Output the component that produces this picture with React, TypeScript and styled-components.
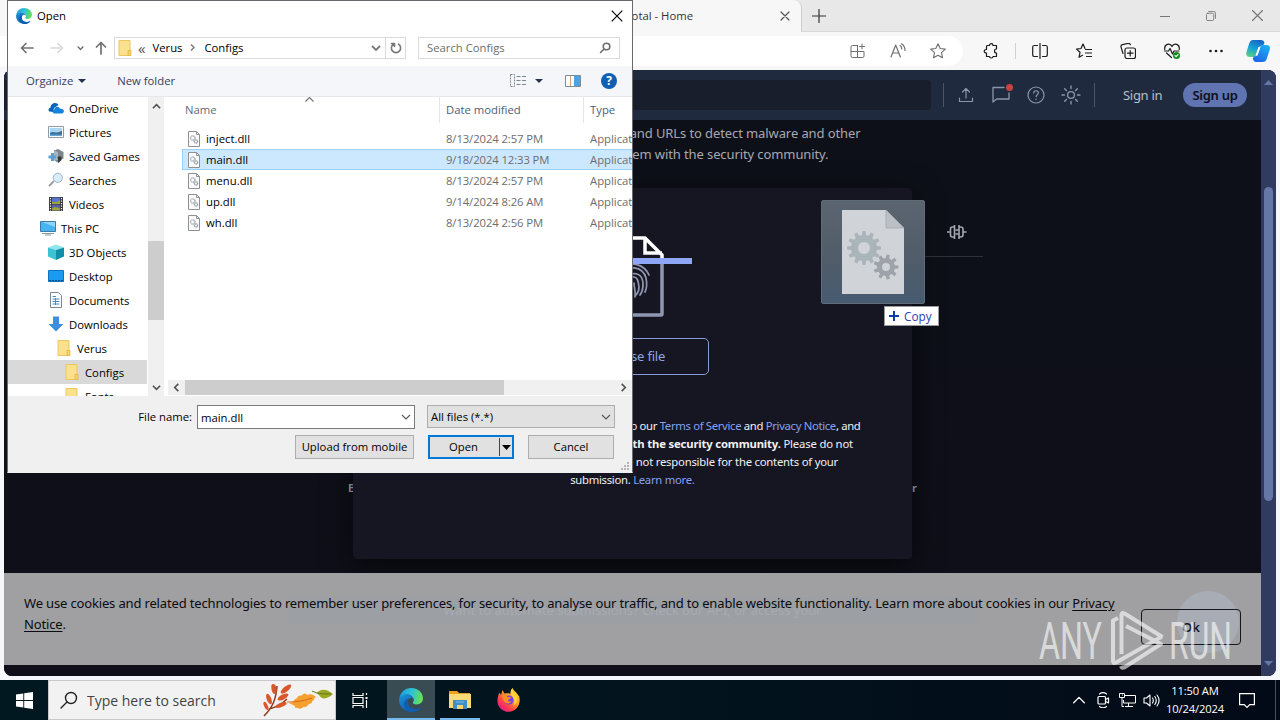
import type { ReactNode } from "react";
import { createGlobalStyle, styled } from "styled-components";

const uiFont = `"Open Sans", "Noto Sans", sans-serif`;

const GlobalStyle = createGlobalStyle`
  * {
    box-sizing: border-box;
  }
  body {
    margin: 0;
    overflow: hidden;
    font-family: ${uiFont};
  }
  svg {
    display: block;
    flex: none;
  }
`;

interface IconProps {
  size?: number;
}

/* ---------- icons ---------- */

const EdgeIcon = ({ size = 16 }: IconProps) => (
  <svg width={size} height={size} viewBox="0 0 24 24">
    <defs>
      <linearGradient id="edgeTop" x1="0" y1="0.3" x2="1" y2="0.5">
        <stop offset="0" stopColor="#1b9de2" />
        <stop offset="0.5" stopColor="#2fc3d6" />
        <stop offset="1" stopColor="#6be04f" />
      </linearGradient>
      <linearGradient id="edgeLow" x1="0" y1="0" x2="0.8" y2="1">
        <stop offset="0" stopColor="#1f95dc" />
        <stop offset="1" stopColor="#0b4f9e" />
      </linearGradient>
    </defs>
    <path d="M.3 11C1 4.500 6 0 12 0c7 0 12 4.800 12 10.300 0 4-3 6.200-6.200 6.200-2.800 0-4.300-1.200-4-2 .3-.6 1-1 1-2.500C14.800 9 11.500 6.500 8 6.500 4 6.500 1 9 .3 11z" fill="url(#edgeTop)" />
    <path d="M.1 12.500C0 8.500 3.500 6.200 7.800 6.200c3.400 0 6.600 2 6.900 5.200-.9-1-2-1.500-3.200-1.300-2 .4-3.300 2.400-2.800 5.200.7 4 4.500 6 8.200 5.700 2-.1 3.600-.7 5.100-1.600C20 22.500 16.500 24 12.500 24 5.500 24 .3 18.800.1 12.500z" fill="url(#edgeLow)" />
    <path d="M8.600 14c-.7 4.500 3.200 7.800 8.400 7 2.500-.4 4.400-1.400 5.200-2.200-3.600 6.400-12.700 6-16 1.500-2.700-3.800-1-9 3.600-10.100-.6.800-1 2.200-1.200 3.800z" fill="#0d5fb5" />
  </svg>
);

const FirefoxIcon = () => (
  <svg width="24" height="24" viewBox="0 0 24 24">
    <defs>
      <linearGradient id="fox" x1="0.9" y1="0.1" x2="0.2" y2="0.95">
        <stop offset="0" stopColor="#ffe63b" />
        <stop offset="0.4" stopColor="#ff9a2a" />
        <stop offset="0.7" stopColor="#ff4545" />
        <stop offset="1" stopColor="#e3168a" />
      </linearGradient>
    </defs>
    <path d="M2.500 4.500 4 7l1.500-5 2 3.500c3-.5 4.500-.2 6 .2-.3-2.200.4-4.200 2.300-5.700.5 3 3.200 3.700 5 6.500l.5 1.500.5-.8c3 8-2 16.600-10 16.600C5 23.800 0 18.400.5 12c.1-3 1-5.500 2-7.500z" fill="url(#fox)" />
    <circle cx="12" cy="12" r="4.600" fill="#7542e5" />
    <path d="M5 7.500c3-1 4.500 0 5.500 1.500 1 .3 3 0 3.500.5-.5 1.500-2.500 1.600-3 2.500 0 1.500 1.800 2 3.500 1.300-1.200 2.200-3.500 2.800-6 1.500C6 13 5.500 10 5 7.500z" fill="#ff8f22" />
    <path d="M15 1c.5 4 5 5 5 11 0 3-2 5-4 6 2-3 2.500-7-1-10-1.500-2-1.500-5 0-7z" fill="#ffd43a" />
  </svg>
);

const ExplorerIcon = () => (
  <svg width="24" height="22" viewBox="0 0 24 22">
    <path d="M1 2h8l2 2h11v4H1z" fill="#e8a327" />
    <path d="M1 5h22v14H1z" fill="#fbdb77" />
    <path d="M5 20v-9h14v9h-4v-4H9v4z" fill="#3f8fc8" />
    <path d="M9 20v-4h6v4z" fill="#f2d270" />
    <path d="M8 13h8" stroke="#7bbbe2" />
  </svg>
);

const CopilotIcon = () => (
  <svg width="24" height="24" viewBox="0 0 24 24">
    <defs>
      <linearGradient id="copL" x1="0.6" y1="0" x2="0.2" y2="1">
        <stop offset="0" stopColor="#1668c8" />
        <stop offset="0.5" stopColor="#16a3d4" />
        <stop offset="1" stopColor="#5bd184" />
      </linearGradient>
      <linearGradient id="copR" x1="0.8" y1="0" x2="0.2" y2="1">
        <stop offset="0" stopColor="#1fb0f0" />
        <stop offset="1" stopColor="#1b63e6" />
      </linearGradient>
    </defs>
    <path d="M7 1h8c2 0 3 1 3.500 3L17 6.500c-3 0-4 1-5 4l-2 6c-.7 1.300-1.500 1.500-3 1.500H4c-3 0-4.500-2-3.500-5L3 5c.8-2.700 2-4 4-4z" fill="url(#copL)" />
    <path d="M17 6h3.500c3 0 4 2 3.200 5L21 19c-.8 3-2.200 4-4.500 4h-6c-2.300 0-3-1-3.700-3.500L8 17.500c2 0 3-1 4-4l2-5c.7-2 1.500-2.500 3-2.500z" fill="url(#copR)" />
    <path d="m12.500 8-3 8.500h2l3-8.500z" fill="#fff" />
  </svg>
);

const Stroke = ({ size = 16, box = 16, w = 1, children }: { size?: number; box?: number; w?: number; children: ReactNode }) => (
  <svg width={size} height={size} viewBox={`0 0 ${box} ${box}`} fill="none" stroke="currentColor" strokeWidth={w} strokeLinecap="round" strokeLinejoin="round">
    {children}
  </svg>
);

const starPath = "m8 .8 2.200 4.700 5.100.6-3.800 3.500 1 5.200L8 12.200l-4.500 2.600 1-5.200L.7 6.100l5.100-.6z";

const FolderIcon = () => (
  <svg width="16" height="16" viewBox="0 0 16 16">
    <path d="M2 .5h11v15H2z" fill="#fbe08d" stroke="#ecc75d" />
    <path d="M11 10.500h3v5h-3z" fill="#f6d06a" stroke="#e0b53f" strokeWidth=".7" />
  </svg>
);

const DllIcon = () => (
  <svg width="14" height="16" viewBox="0 0 14 16">
    <path d="M1.500.5h8l3 3v12h-11z" fill="#fbfbfb" stroke="#8d9194" />
    <path d="M9.500.5v3h3" fill="none" stroke="#8d9194" />
    <circle cx="5.800" cy="7" r="2.200" fill="none" stroke="#9aa6b0" strokeDasharray="1.200 .4" strokeWidth="1.300" />
    <circle cx="9" cy="10.500" r="1.600" fill="none" stroke="#8a9299" strokeDasharray="1 .4" strokeWidth="1.300" />
  </svg>
);

const placeIcons: Record<string, ReactNode> = {
  onedrive: (
    <svg width="16" height="16" viewBox="0 0 16 16">
      <path d="M1.500 11.500C0 10.800.3 8 2.500 7.700 2.600 4.500 5 3 7 3c1.700 0 2.900.8 3.500 2L6 8l-1 4z" fill="#0a63b8" />
      <path d="M6.500 13.500c-2.300 0-2.500-3.500-.2-4C6.500 6.800 10.500 5.600 12 8.700c3-.4 4.300 1.300 3.800 3-.3 1.200-1 1.800-2.300 1.800z" fill="#1583dc" />
    </svg>
  ),
  pictures: (
    <svg width="16" height="16" viewBox="0 0 16 16">
      <path d="M.5 2.500h15v11H.5z" fill="#fff" stroke="#8f9ba6" />
      <path d="M2 4h12v8H2z" fill="#a9d4f2" />
      <path d="M2 9c3-2 5 0 7-.5L14 7v5H2z" fill="#3f6f96" />
      <path d="M2 10.500h12V12H2z" fill="#5fa4d6" />
    </svg>
  ),
  games: (
    <svg width="16" height="16" viewBox="0 0 16 16">
      <path d="M6 2.500 10 1l5.500 3v6.500L12 12l-1.500 3L6 12z" fill="#7b878f" />
      <path d="m6 2.500 4 1.500v8L6 12z" fill="#a9b4bc" />
      <path d="M9.500 8.500h4V12l-3 3z" fill="#30383d" />
      <path d="M3 5h3v2.500h2v3H6V13H3v-2.500H.5v-3H3z" fill="#58a0d8" />
    </svg>
  ),
  searches: (
    <svg width="16" height="16" viewBox="0 0 16 16">
      <path d="m1 14 5-5" stroke="#9aa0a6" strokeWidth="1.800" />
      <circle cx="9.800" cy="5.800" r="4.600" fill="#d8edfb" stroke="#9fb4c4" />
    </svg>
  ),
  videos: (
    <svg width="16" height="16" viewBox="0 0 16 16">
      <path d="M1 1h14v14H1z" fill="#32363c" />
      <path d="M4 1.500h8V8H4z" fill="#5b73c9" />
      <path d="M4 8.500h8v6H4z" fill="#5560a8" />
      <path d="M4 6h5l3-2v4H4zM4 12l3-1 5 1v2.500H4z" fill="#9ca33c" />
      <path d="M2.500 2v13M13.500 2v13" stroke="#fff" strokeWidth="1.200" strokeDasharray="1.300 1.200" />
    </svg>
  ),
  pc: (
    <svg width="16" height="16" viewBox="0 0 16 16">
      <path d="M.5 1.500h15v10H.5z" fill="#48b4f0" stroke="#3d7ba6" />
      <path d="M2 2h13v5z" fill="#8fd4f9" />
      <path d="M2 13.500h12M5 15h6" stroke="#8d9aa5" />
    </svg>
  ),
  objects: (
    <svg width="16" height="16" viewBox="0 0 16 16">
      <path d="m0 3.500 8-3 8 3-8 2.500z" fill="#8fe7ee" />
      <path d="M0 3.500 8 6v10l-8-3.500z" fill="#3cc4d4" />
      <path d="M16 3.500 8 6v10l8-3.500z" fill="#128ea6" />
    </svg>
  ),
  desktop: (
    <svg width="16" height="16" viewBox="0 0 16 16">
      <path d="M.5 2.500h15v11H.5z" fill="#1a9af0" stroke="#1273ba" />
      <path d="M1 12.500h14" stroke="#0a4f89" strokeDasharray="2 1" />
    </svg>
  ),
  documents: (
    <svg width="16" height="16" viewBox="0 0 16 16">
      <path d="M2.500.5h8l3 3v12h-11z" fill="#fff" stroke="#7b8790" />
      <path d="M4.500 4.500H8M4.500 7h7M4.500 9.500h7M4.500 12h7M7.500 6v7" stroke="#3f8ec9" />
    </svg>
  ),
  downloads: (
    <svg width="16" height="16" viewBox="0 0 16 16">
      <path d="M5 .5h6v7.500h4.500L8 15.500.5 8H5z" fill="#3e8ede" />
    </svg>
  ),
  folder: <FolderIcon />,
};

const gearPath = (teeth: number, outer: number, inner: number) => {
  const points: string[] = [];
  const step = (Math.PI * 2) / teeth;
  for (let i = 0; i < teeth; i++) {
    [
      [-0.3, inner],
      [-0.18, outer],
      [0.18, outer],
      [0.3, inner],
    ].forEach(([shift, radius]) => {
      const a = (i + shift) * step;
      points.push(`${(Math.cos(a) * radius).toFixed(2)},${(Math.sin(a) * radius).toFixed(2)}`);
    });
  }
  return points.join(" ");
};

/* ---------- browser ---------- */

const TabStrip = () => (
  <TabBar>
    <ActiveTab>
      <span>VirusTotal - Home</span>
      <Stroke size={10} box={10} w={1.2}>
        <path d="m1 1 8 8M9 1 1 9" />
      </Stroke>
    </ActiveTab>
    <NewTab>
      <Stroke size={14} box={14} w={1.2}>
        <path d="M7 .5v13M.5 7h13" />
      </Stroke>
    </NewTab>
    <WindowButton>
      <Stroke size={10} box={10}>
        <path d="M0 5.500h10" />
      </Stroke>
    </WindowButton>
    <WindowButton>
      <Stroke size={10} box={11}>
        <rect x=".5" y="2.500" width="8" height="8" rx="1.500" />
        <path d="M3 .5h5.500a2 2 0 0 1 2 2V8" />
      </Stroke>
    </WindowButton>
    <WindowButton>
      <Stroke size={11} box={11} w={1.2}>
        <path d="m.5.5 10 10M10.500.5l-10 10" />
      </Stroke>
    </WindowButton>
  </TabBar>
);

const Toolbar = () => (
  <ToolRow>
    <AddressBar>
      <ToolSlot $width={40}>
        <Stroke>
          <path d="M7.500 2.500h-5a1.500 1.500 0 0 0-1.500 1.500v9A1.500 1.500 0 0 0 2.500 14.500h10A1.500 1.500 0 0 0 14 13V8.500H1M7.500 2.500v12M12 1v5M9.500 3.500h5" />
        </Stroke>
      </ToolSlot>
      <ToolSlot $width={40}>
        <Stroke w={1.2}>
          <path d="m1 14 4.700-12 4.700 12M2.600 10h6.200M10 2.500c1.200.8 1.800 2 1.800 3.500M11.500.8C13.800 2.300 15 4.500 15 7.500" />
        </Stroke>
      </ToolSlot>
      <ToolSlot $width={40}>
        <Stroke w={1.1}>
          <path d={starPath} />
        </Stroke>
      </ToolSlot>
    </AddressBar>
    <ToolSlot $width={40} $dark>
      <Stroke w={1.2}>
        <path d="M4 2.500h2.500c0-2.500 3.500-2.500 3.500 0h3.500V6c-2.700 0-2.700 4 0 4v3.500H10c0 2-3.500 2-3.500 0H3.500V10c-3 0-3-3.500 0-3.500v-3z" />
      </Stroke>
    </ToolSlot>
    <ToolDivider />
    <ToolSlot $width={44} $dark>
      <Stroke w={1.2}>
        <path d="M5.500 2.500H2A1.500 1.500 0 0 0 .7 4v8A1.500 1.500 0 0 0 2 13.500h3.500M10.500 2.500H14A1.500 1.500 0 0 1 15.300 4v8a1.500 1.500 0 0 1-1.300 1.500h-3.500M8 .5v15" />
      </Stroke>
    </ToolSlot>
    <ToolSlot $width={44} $dark>
      <Stroke w={1.2}>
        <path d="M9 5.500 7 1 5 5.500l-4.500.6L4 9.300l-1 5 3.500-2M9.500 6.500h6M9.500 10h6M10.500 13.500h5" />
      </Stroke>
    </ToolSlot>
    <ToolSlot $width={44} $dark>
      <Stroke w={1.2}>
        <rect x="5" y="5" width="10.500" height="10.500" rx="2" />
        <path d="M10.200 7.500v5.500M7.500 10.200H13M3 10.500 1 3.800A1.800 1.800 0 0 1 2.300 1.700L8 .5c1-.2 2 .3 2.300 1.200" />
      </Stroke>
    </ToolSlot>
    <ToolSlot $width={44} $dark>
      <Stroke w={1.2}>
        <path d="M.8 6.500C0 1 6-.5 8 3.500 10-.5 16 1 15.200 6.500M.5 8h4L6 5.500 8.500 11l1.500-3h5M2.500 10l5 4.500" />
        <circle cx="12.500" cy="12.500" r="3.500" fill="#128a1b" stroke="none" />
        <path d="m11 12.600 1.100 1 1.900-2" stroke="#fff" />
      </Stroke>
    </ToolSlot>
    <ToolSlot $width={44} $dark>
      <svg width="14" height="4" fill="currentColor">
        <circle cx="1.500" cy="2" r="1.300" />
        <circle cx="7" cy="2" r="1.300" />
        <circle cx="12.500" cy="2" r="1.300" />
      </svg>
    </ToolSlot>
    <ToolSlot $width={40}>
      <CopilotIcon />
    </ToolSlot>
  </ToolRow>
);

const SiteHeader = () => (
  <Header>
    <SearchField />
    <HeaderDivider />
    <HeaderSlot>
      <Stroke w={1.2}>
        <path d="M8 11V2M4.500 5 8 1.500 11.500 5M1.500 11v3.500h13V11" />
      </Stroke>
    </HeaderSlot>
    <HeaderSlot>
      <Stroke size={20} box={20} w={1.3}>
        <path d="M13 2.500H2v14.500l3.500-3H18V8" />
      </Stroke>
      <AlertDot />
    </HeaderSlot>
    <HeaderSlot>
      <Stroke size={18} box={18} w={1.2}>
        <circle cx="9" cy="9" r="8" />
        <path d="M6.700 7c0-3 4.700-3 4.700 0 0 1.700-2.300 1.800-2.300 3.700M9 13v.4" />
      </Stroke>
    </HeaderSlot>
    <HeaderSlot>
      <Stroke size={20} box={20} w={1.4}>
        <circle cx="10" cy="10" r="3.400" />
        <path d="M10 1v2.500M10 16.500V19M1 10h2.500M16.500 10H19M3.700 3.700l1.700 1.700M14.600 14.600l1.700 1.700M3.700 16.300l1.700-1.700M14.600 5.400l1.700-1.700" />
      </Stroke>
    </HeaderSlot>
    <HeaderDivider />
    <SignIn>Sign in</SignIn>
    <SignUp>Sign up</SignUp>
  </Header>
);

const FingerprintFile = () => (
  <svg width="120" height="84" viewBox="573 236 120 84" fill="none">
    <path d="M662 258v57a1 1 0 0 1-1 1h-57a1 1 0 0 1-1-1v-55" stroke="#8f96b0" strokeWidth="3.500" />
    <path d="M603 262v-23h42l17 17v6M645 239v15h17" stroke="#fff" strokeWidth="3.500" />
    <g stroke="#8f96b0" strokeWidth="1.700" strokeLinecap="round">
      <path d="M622 268c9-6 22-3 27 8M620 276c6-11 23-9 26 3 1 5 1 10-1 14M624 288c-2-15 18-19 19-4 0 5 0 8-3 12M629 294c-3-9-1-17 5-16 5 1 4 6 5 10 0 3-1 6-3 8M634 284c0 5 2 8 1 14" />
    </g>
    <path d="M574 259h118v6H574z" fill="#8ea6f5" />
  </svg>
);

const UploadCard = () => (
  <Card>
    <FingerprintFile />
    <ChooseFile>Choose file</ChooseFile>
    <Terms>
      <TermsLine $width={456} $tight={-0.33}>
        By submitting data above, you are agreeing to our <a>Terms of Service</a> and <a>Privacy Notice</a>, and
      </TermsLine>
      <TermsLine $width={441} $tight={-0.17}>
        to the <b>sharing of your Sample submission with the security community.</b> Please do not
      </TermsLine>
      <TermsLine $width={411} $tight={-0.22}>
        submit any personal information; we are not responsible for the contents of your
      </TermsLine>
      <TermsLine $width={124} $tight={-0.28}>
        submission. <a>Learn more.</a>
      </TermsLine>
    </Terms>
  </Card>
);

const CookieNotice = () => (
  <CookieBar>
    <HelpBubble />
    <ApiHint>Want to automate submissions? Check our API, or access your</ApiHint>
    <CookieText>
      We use cookies and related technologies to remember user preferences, for security, to analyse our traffic, and to enable website functionality. Learn more about
      cookies in our <u>Privacy</u>
      <br />
      <u>Notice</u>.
    </CookieText>
    <OkButton>Ok</OkButton>
  </CookieBar>
);

const Watermark = () => (
  <WatermarkLayer width="200" height="64" viewBox="1036 610 200 64">
    <g fill="#fff" fontFamily="Roboto, sans-serif" fontWeight="400" fontSize="52">
      <text x="1039" y="659" textLength="63" lengthAdjust="spacingAndGlyphs">ANY</text>
      <text x="1169" y="659" textLength="63" lengthAdjust="spacingAndGlyphs">RUN</text>
    </g>
    <g fill="none" stroke="#fff" strokeWidth="4" strokeLinejoin="round">
      <path d="M1121.500 654v-39q0-3 3-1.500l38 23.500" />
      <path d="M1118 618l-5 2.500V661q0 3 3 1.500l46-26" />
      <path d="M1126 626l35 18-36 23q-3 2-4-1" />
    </g>
  </WatermarkLayer>
);

/* ---------- file dialog ---------- */

const places = [
  { name: "OneDrive", icon: "onedrive", level: 1 },
  { name: "Pictures", icon: "pictures", level: 1 },
  { name: "Saved Games", icon: "games", level: 1 },
  { name: "Searches", icon: "searches", level: 1 },
  { name: "Videos", icon: "videos", level: 1 },
  { name: "This PC", icon: "pc", level: 0 },
  { name: "3D Objects", icon: "objects", level: 1 },
  { name: "Desktop", icon: "desktop", level: 1 },
  { name: "Documents", icon: "documents", level: 1 },
  { name: "Downloads", icon: "downloads", level: 1 },
  { name: "Verus", icon: "folder", level: 2 },
  { name: "Configs", icon: "folder", level: 3 },
  { name: "Fonts", icon: "folder", level: 3 },
];

const files = [
  { name: "inject.dll", date: "8/13/2024 2:57 PM" },
  { name: "main.dll", date: "9/18/2024 12:33 PM" },
  { name: "menu.dll", date: "8/13/2024 2:57 PM" },
  { name: "up.dll", date: "9/14/2024 8:26 AM" },
  { name: "wh.dll", date: "8/13/2024 2:56 PM" },
];

const Chevron = ({ d, w = 1.6, size = 10 }: { d: string; w?: number; size?: number }) => (
  <svg width={size} height={size} viewBox="0 0 10 10" fill="none" stroke="currentColor" strokeWidth={w}>
    <path d={d} />
  </svg>
);
const down = "m1 3 4 4 4-4";
const up = "m1 7 4-4 4 4";
const left = "M7 1 3 5l4 4";
const right = "m3 1 4 4-4 4";

const OpenDialog = () => (
  <Dialog>
    <TitleBar>
      <EdgeIcon />
      <span>Open</span>
      <svg width="12" height="12" viewBox="0 0 12 12" stroke="#000" strokeWidth="1.100">
        <path d="m.7.7 10.600 10.600M11.300.7.7 11.300" />
      </svg>
    </TitleBar>
    <NavRow>
      <NavSlot $width={24}>
        <Stroke size={14} box={14} w={1.7}>
          <path d="M1.500 7H13M6 2.500 1.500 7 6 11.500" />
        </Stroke>
      </NavSlot>
      <NavSlot $width={35} $faded>
        <Stroke size={14} box={14} w={1.7}>
          <path d="M1 7h11.500M8 2.500 12.500 7 8 11.500" />
        </Stroke>
      </NavSlot>
      <NavSlot $width={12}>
        <svg width="7" height="10" viewBox="0 0 10 10" fill="none" stroke="currentColor" strokeWidth="2">
          <path d={down} />
        </svg>
      </NavSlot>
      <NavSlot $width={29}>
        <Stroke size={14} box={14} w={1.7}>
          <path d="M7 13V1.500M2.500 6 7 1.500 11.500 6" />
        </Stroke>
      </NavSlot>
      <PathBox>
        <FolderIcon />
        <Crumb $left={5}>«</Crumb>
        <Crumb $left={7} $dark>Verus</Crumb>
        <CrumbArrow>
          <svg width="5" height="7" viewBox="0 0 5 7" fill="none" stroke="currentColor" strokeWidth="1.400">
            <path d="m1 .5 3 3-3 3" />
          </svg>
        </CrumbArrow>
        <Crumb $left={0} $dark>Configs</Crumb>
        <PathEnd>
          <Chevron d={down} w={1.8} />
        </PathEnd>
        <Refresh>
          <Stroke size={12} box={12} w={1.6}>
            <path d="M3.500 2.200a4.600 4.600 0 1 0 5 0M1.500 1.500h3v3" />
          </Stroke>
        </Refresh>
      </PathBox>
      <SearchBox>
        <span>Search Configs</span>
        <Stroke size={12} box={12} w={1.6}>
          <circle cx="7.500" cy="4.500" r="3.300" />
          <path d="M5 7 1.500 10.500" />
        </Stroke>
      </SearchBox>
    </NavRow>
    <CommandBar>
      <Command>
        Organize
        <Caret />
      </Command>
      <Command $left={31}>New folder</Command>
      <CommandIcons>
        <svg width="17" height="13" viewBox="0 0 17 13" fill="none" stroke="#7d8790">
          <path d="M.5.500h4v12h-4z" strokeDasharray="2 1" />
          <path d="M6.500 2.500H17M6.500 6.500H17M6.500 10.500H17" strokeDasharray="4 1.500" />
        </svg>
        <Caret />
        <PreviewIcon>
          <svg width="16" height="12" viewBox="0 0 16 12">
            <path d="M.5.500h15v11H.5z" fill="#fff" stroke="#7c8b98" />
            <path d="M9 1h6v10H9z" fill="#4ba3e3" />
            <path d="M5.500 1v10" stroke="#e2a06d" />
          </svg>
        </PreviewIcon>
        <HelpBadge>?</HelpBadge>
      </CommandIcons>
    </CommandBar>
    <Panes>
      <PlaceList>
        {places.map((place) => (
          <Place key={place.name} $level={place.level} $selected={place.name === "Configs"}>
            {placeIcons[place.icon]}
            <span>{place.name}</span>
          </Place>
        ))}
      </PlaceList>
      <VerticalScroll>
        <Chevron d={up} w={1.8} size={9} />
        <VerticalThumb />
        <Chevron d={down} w={1.8} size={9} />
      </VerticalScroll>
      <FilePane>
        <ColumnHeads>
          <Head $width={273} $muted>Name</Head>
          <Head $width={144}>Date modified</Head>
          <Head $width={60}>Type</Head>
          <SortMark>
            <svg width="9" height="5" viewBox="0 0 9 5" fill="none" stroke="#777" strokeWidth="1.200">
              <path d="M.5 4.500l4-4 4 4" />
            </svg>
          </SortMark>
        </ColumnHeads>
        {files.map((file) => (
          <FileRow key={file.name} $selected={file.name === "main.dll"}>
            <FileName>
              <DllIcon />
              {file.name}
            </FileName>
            <FileDate>{file.date}</FileDate>
            <FileType>Application extension</FileType>
          </FileRow>
        ))}
        <HorizontalScroll>
          <Chevron d={left} w={1.8} size={9} />
          <HorizontalThumb />
          <Chevron d={right} w={1.8} size={9} />
        </HorizontalScroll>
      </FilePane>
    </Panes>
    <DialogFooter>
      <FooterRow>
        <FileLabel>File name:</FileLabel>
        <NameField>
          main.dll
          <Chevron d={down} w={1.1} />
        </NameField>
        <TypeField>
          All files (*.*)
          <Chevron d={down} w={1.1} />
        </TypeField>
      </FooterRow>
      <FooterRow $top={6}>
        <PushButton $width={119} $right={14}>Upload from mobile</PushButton>
        <OpenButton>
          <span>Open</span>
          <SplitArrow>
            <svg width="9" height="5" viewBox="0 0 9 5">
              <path d="M0 0h9L4.500 5z" />
            </svg>
          </SplitArrow>
        </OpenButton>
        <PushButton $width={86} $right={0}>Cancel</PushButton>
      </FooterRow>
      <Grip>
        <svg width="9" height="9" viewBox="0 0 9 9" fill="#b5b5b5">
          <path d="M6 0h2v2H6zM3 3h2v2H3zM6 3h2v2H6zM0 6h2v2H0zM3 6h2v2H3zM6 6h2v2H6z" />
        </svg>
      </Grip>
    </DialogFooter>
  </Dialog>
);

const DragPreview = () => (
  <DragTile>
    <svg width="62" height="84" viewBox="0 0 62 84">
      <path d="M0 0h44l18 18v66H0z" fill="#d0d3d7" />
      <path d="M44 0v18h18z" fill="#bcc0c4" stroke="#a2a7ac" strokeWidth=".7" />
      <g transform="translate(22 38)" fill="#aab4bb">
        <polygon points={gearPath(12, 17, 13)} />
        <circle r="6" fill="#d0d3d7" />
      </g>
      <g transform="translate(44 57)" fill="#9da3a9">
        <polygon points={gearPath(9, 12.500, 9)} />
        <circle r="4" fill="#d0d3d7" />
      </g>
    </svg>
  </DragTile>
);

/* ---------- taskbar ---------- */

const AutumnLeaves = () => (
  <svg width="72" height="34" viewBox="262 683 72 34">
    <path d="M264 716c9-9 12-17 13-30M269 709c8-2 14-6 18-10" fill="none" stroke="#8c3a1b" strokeWidth="1.500" />
    <g fill="#d9582b">
      <ellipse cx="274" cy="689" rx="2.500" ry="5" transform="rotate(-12 274 689)" />
      <ellipse cx="286" cy="689" rx="2.500" ry="6.500" transform="rotate(50 286 689)" />
      <ellipse cx="283" cy="697" rx="2.500" ry="6" transform="rotate(62 283 697)" />
      <ellipse cx="281" cy="705" rx="2.200" ry="6" transform="rotate(70 281 705)" />
      <ellipse cx="269" cy="699" rx="2.300" ry="5.500" transform="rotate(-22 269 699)" />
      <ellipse cx="266" cy="706" rx="1.800" ry="4.500" transform="rotate(-25 266 706)" />
    </g>
    <path d="M289 703c3 0 4-1 6-4 2 1 3-5 6-3 2-2 4-4 6-1 4-2 7 0 9 2-3 1-1 4-4 4 1 3-3 2-4 4-2 3-4 1-6 3-3 2-4-1-7 0 1-3-3-3-6-5z" fill="#f5a02f" />
    <path d="M287 702c9 0 17-1 25-4" fill="none" stroke="#d66b1a" />
    <path d="M317 693c4-5 10-4 16 1-4 4-11 7-14 1l-3-2z" fill="#9aa822" />
    <path d="M312 691c6 3 12 3 19 3" fill="none" stroke="#65751a" />
  </svg>
);

const Taskbar = () => (
  <TaskRow>
    <StartButton>
      <svg width="17" height="17" viewBox="0 0 17 17" fill="#fff">
        <path d="M0 2.500 7.300 1.400v6.700H0zM8.200 1.300 17 0v8.100H8.200zM0 9h7.300v6.600L0 14.500zM8.200 9H17v8l-8.800-1.200z" />
      </svg>
    </StartButton>
    <TaskSearch>
      <Stroke size={18} box={18} w={1.4}>
        <circle cx="11" cy="7" r="5.500" />
        <path d="m7 11-6 6" />
      </Stroke>
      <span>Type here to search</span>
      <AutumnLeaves />
    </TaskSearch>
    <TaskButton $gap={3}>
      <svg width="17" height="17" viewBox="0 0 17 17" fill="none" stroke="#fff" strokeWidth="1.200">
        <path d="M1 1v2.500h10V1M1 5.500h10v6H1zM1 16v-2.500h10V16M14.500 1v2M14.500 8v8" />
        <path d="M13.500 5h2v2h-2z" fill="#fff" stroke="none" />
      </svg>
    </TaskButton>
    <TaskButton $active $gap={1}>
      <EdgeIcon size={24} />
    </TaskButton>
    <TaskButton $open $gap={1}>
      <ExplorerIcon />
    </TaskButton>
    <TaskButton>
      <FirefoxIcon />
    </TaskButton>
    <Tray>
      <TraySlot>
        <Stroke size={12} box={12} w={1.3}>
          <path d="m.7 8.700 5.300-5.300 5.300 5.300" />
        </Stroke>
      </TraySlot>
      <TraySlot>
        <Stroke w={1.2}>
          <rect x="3" y="4.500" width="7.500" height="7.500" rx="1" />
          <path d="m10.500 7.500 3-1.500v5l-3-1.500M4.500 2c2-1.500 5-1.500 7 0M4.500 14.500c2 1.500 5 1.500 7 0" />
        </Stroke>
      </TraySlot>
      <TraySlot>
        <svg width="17" height="16" viewBox="0 0 17 16" fill="none" stroke="#fff">
          <path d="M6 3.500h10.500v7.500H4.500V8M9.500 11v3M6 14.500h8M.5 1.500h5v4h-5zM3 5.500v9h2M3 3h1" />
        </svg>
      </TraySlot>
      <TraySlot>
        <Stroke size={17} box={17} w={1.1}>
          <path d="M1 6v5h2.500L7 14V3L3.500 6zM9.500 6c1 1.500 1 3.500 0 5M11.800 4.500c1.700 2.300 1.700 5.700 0 8M14 3c2.500 3.300 2.500 7.700 0 11" />
        </Stroke>
      </TraySlot>
      <Clock>
        <span>11:50 AM</span>
        <span>10/24/2024</span>
      </Clock>
      <Notifications>
        <svg width="16" height="17" viewBox="0 0 16 17" fill="none" stroke="#fff" strokeWidth="1.200">
          <path d="M.6 1.600h14.800v11h-4.600L8 15.500l-2.800-2.900H.6z" />
        </svg>
      </Notifications>
    </Tray>
  </TaskRow>
);

const App = () => (
  <Screen>
    <GlobalStyle />
    <Browser>
      <TabStrip />
      <Toolbar />
      <Page>
        <Site>
          <SiteHeader />
          <Intro>
            <IntroLine $width={456}>Analyse suspicious files, domains, IPs and URLs to detect malware and other</IntroLine>
            <IntroLine $width={392}>breaches, automatically share them with the security community.</IntroLine>
          </Intro>
          <SearchTab>
            <svg width="20" height="18" viewBox="0 0 20 18" fill="none" stroke="#a5a5ae" strokeWidth="1.600">
              <path d="M7.500 2v14M12 2v14M7.500 4H5.500Q3.500 4 3.500 6v6q0 2 2 2h2M12 4h1.500q2.500 0 2.500 2v6q0 2-2.500 2H12M0 9h3.500M16 9h3.500M8.500 7H12M8.500 11H12" />
            </svg>
          </SearchTab>
          <SampleNote>
            <span>By submitting data above, you are agreeing to our terms</span>
            <span>your</span>
          </SampleNote>
          <UploadCard />
          <CookieNotice />
        </Site>
        <PageScroll>
          <ScrollArrow>
            <path d="M0 5h9L4.500 0z" />
          </ScrollArrow>
          <PageThumb />
          <ScrollArrow>
            <path d="M0 0h9L4.500 5z" />
          </ScrollArrow>
        </PageScroll>
      </Page>
    </Browser>
    <Taskbar />
    <OpenDialog />
    <DragPreview />
    <CopyTip>
      <svg width="10" height="10" viewBox="0 0 10 10" stroke="#1038b0" strokeWidth="2">
        <path d="M5 0v10M0 5h10" />
      </svg>
      Copy
    </CopyTip>
    <Watermark />
  </Screen>
);

export default App;

const Screen = styled.div`
  position: relative;
  display: grid;
  grid-template-rows: 680px 40px;
  width: 1280px;
  height: 720px;
  overflow: hidden;
`;

const Browser = styled.div`
  display: flex;
  flex-direction: column;
  background: #f6f7fb;
`;

const TabBar = styled.div`
  display: flex;
  align-items: center;
  height: 32px;
  background: #e8e8e8;
  border-bottom: 1px solid #d9d9d9;
`;

const ActiveTab = styled.div`
  display: flex;
  align-items: center;
  justify-content: flex-end;
  width: 802px;
  height: 32px;
  padding-right: 11px;
  background: #f7f7f7;
  border-right: 1px solid #cfcfcf;
  border-radius: 0 8px 0 0;
  color: #555;
  font-size: 11.3px;
  span {
    width: 153px;
    color: #333;
    text-align: right;
    margin-right: 87px;
  }
`;

const NewTab = styled.div`
  display: flex;
  flex: 1;
  padding-left: 10px;
  color: #333;
`;

const WindowButton = styled.div`
  display: flex;
  justify-content: center;
  width: 46px;
  color: #777;
`;

const ToolRow = styled.div`
  display: flex;
  align-items: center;
  height: 38px;
  background: #f7f7f7;
`;

const AddressBar = styled.div`
  display: flex;
  align-items: center;
  justify-content: flex-end;
  width: 963px;
  height: 30px;
  padding-right: 5px;
  margin-right: 8px;
  background: #fff;
  border-radius: 0 15px 15px 0;
`;

const ToolSlot = styled.div<{ $width: number; $dark?: boolean }>`
  display: flex;
  justify-content: center;
  width: ${(props) => props.$width}px;
  color: ${(props) => (props.$dark ? "#1c1c1c" : "#707070")};
`;

const ToolDivider = styled.div`
  width: 1px;
  height: 16px;
  margin: 0 2px 0 4px;
  background: #d0d0d0;
`;

const Page = styled.div`
  display: flex;
  width: 1272px;
  height: 606px;
  margin-left: 4px;
  border-radius: 8px;
  overflow: hidden;
  background: #0e0f18;
`;

const Site = styled.div`
  position: relative;
  width: 1257px;
  height: 606px;
  overflow: hidden;
  background: linear-gradient(#0e1019 40%, #0f0e19);
`;

const Header = styled.div`
  display: flex;
  align-items: center;
  height: 50px;
  padding-right: 14px;
  background: #1f2a3f;
  color: #8b95a9;
`;

const SearchField = styled.div`
  width: 927px;
  height: 30px;
  margin-right: 12px;
  background: #191e2c;
  border-radius: 0 4px 4px 0;
`;

const HeaderDivider = styled.div`
  width: 1px;
  height: 24px;
  margin-right: 5px;
  background: #4a556b;
  &:nth-child(2) {
    margin-right: 4px;
  }
  &:nth-child(7) {
    margin-left: 6px;
  }
`;

const HeaderSlot = styled.div`
  position: relative;
  display: flex;
  justify-content: center;
  width: 35px;
`;

const AlertDot = styled.div`
  position: absolute;
  top: -1px;
  right: 5px;
  width: 7px;
  height: 7px;
  border-radius: 50%;
  background: #c8433f;
`;

const SignIn = styled.span`
  margin-left: 23px;
  width: 60px;
  color: #b9bfca;
  font: 13px "Noto Sans", sans-serif;
  letter-spacing: -0.3px;
`;

const SignUp = styled.span`
  display: flex;
  align-items: center;
  justify-content: center;
  width: 64px;
  height: 24px;
  border-radius: 12px;
  background: #5f74b0;
  color: #0b0f20;
  font: 600 13px "Noto Sans", sans-serif;
  letter-spacing: -0.3px;
`;

const Intro = styled.div`
  display: flex;
  flex-direction: column;
  align-items: center;
  padding-top: 3px;
`;

const IntroLine = styled.div<{ $width: number }>`
  display: flex;
  justify-content: flex-end;
  width: ${(props) => props.$width}px;
  height: 21px;
  color: #a8a8ae;
  font: 13px/21px "Noto Sans", sans-serif;
  letter-spacing: -0.1px;
  white-space: nowrap;
`;

const SearchTab = styled.div`
  display: flex;
  justify-content: flex-end;
  width: 700px;
  height: 45px;
  margin: 47px auto 0;
  padding: 11px 16px 0 0;
  border-bottom: 1px solid #2e303a;
`;

const SampleNote = styled.div`
  display: flex;
  justify-content: space-between;
  width: 569px;
  margin: 222px auto 0;
  color: #b0b0b8;
  font: 600 11.5px/18px "Noto Sans", sans-serif;
`;

const Card = styled.div`
  position: absolute;
  top: 118px;
  left: 349px;
  display: flex;
  flex-direction: column;
  align-items: center;
  width: 559px;
  height: 371px;
  padding-top: 47px;
  border-radius: 4px;
  background: #161622;
  box-shadow: 0 8px 30px rgba(0, 0, 0, 0.6);
`;

const ChooseFile = styled.div`
  display: flex;
  align-items: center;
  justify-content: center;
  width: 153px;
  height: 37px;
  margin-top: 19px;
  padding-bottom: 1px;
  border: 1px solid #8a9bd8;
  border-radius: 5px;
  color: #8fa4ec;
  font: 13px "Noto Sans", sans-serif;
  letter-spacing: -0.2px;
`;

const Terms = styled.div`
  display: flex;
  flex-direction: column;
  align-items: center;
  margin-top: 42px;
`;

const TermsLine = styled.div<{ $width: number; $tight: number }>`
  display: flex;
  justify-content: flex-end;
  width: ${(props) => props.$width}px;
  color: #f0f0f4;
  font: 11.3px/18px "Noto Sans", sans-serif;
  letter-spacing: ${(props) => props.$tight}px;
  white-space: pre;
  a {
    color: #86a0ee;
  }
`;

const CookieBar = styled.div`
  position: absolute;
  top: 503px;
  left: 0;
  display: flex;
  justify-content: space-between;
  width: 1257px;
  height: 92px;
  padding: 20px 20px 0;
  background: #a0a0a2;
`;

const CookieText = styled.p`
  position: relative;
  margin: 0;
  color: #0b0b10;
  font: 13px/21px "Noto Sans", sans-serif;
  letter-spacing: -0.155px;
  white-space: nowrap;
  u {
    text-underline-offset: 2px;
  }
`;

const OkButton = styled.div`
  position: relative;
  display: flex;
  align-items: center;
  justify-content: center;
  width: 100px;
  height: 36px;
  margin-top: 16px;
  border: 1px solid #16161f;
  border-radius: 4px;
  color: #16161f;
  font: 600 13px "Noto Sans", sans-serif;
`;

const HelpBubble = styled.div`
  position: absolute;
  top: 18px;
  left: 1173px;
  width: 62px;
  height: 62px;
  border-radius: 50%;
  background: #a8acb4;
`;

const ApiHint = styled.div`
  position: absolute;
  top: 24px;
  left: 284px;
  width: 689px;
  height: 27px;
  background: #9c9fa4;
  color: #a9abaf;
  font: 13px/27px "Noto Sans", sans-serif;
  text-align: center;
`;

const PageScroll = styled.div`
  display: flex;
  flex-direction: column;
  align-items: center;
  justify-content: space-between;
  width: 15px;
  padding: 10px 0;
  background: #2f3c5f;
`;

const ScrollArrow = styled.svg.attrs({ width: 9, height: 5 })`
  fill: #6576a7;
`;

const PageThumb = styled.div`
  width: 9px;
  height: 314px;
  margin: 102px 0 auto;
  border-radius: 5px;
  background: #6576a7;
`;

const Dialog = styled.div`
  position: absolute;
  top: 0;
  left: 7px;
  display: flex;
  flex-direction: column;
  width: 626px;
  height: 473px;
  border: 1px solid #6a6a6e;
  border-bottom-color: #f0f0f0;
  background: #fff;
  color: #000;
  font-size: 11.3px;
  white-space: nowrap;
`;

const TitleBar = styled.div`
  display: flex;
  align-items: center;
  height: 29px;
  padding: 0 9px 0 8px;
  span {
    flex: 1;
    margin-left: 5px;
  }
`;

const NavRow = styled.div`
  display: flex;
  align-items: center;
  height: 36px;
  padding-left: 7px;
`;

const NavSlot = styled.div<{ $width: number; $faded?: boolean }>`
  display: flex;
  justify-content: center;
  width: ${(props) => props.$width}px;
  color: ${(props) => (props.$faded ? "#d8d8d8" : "#707070")};
`;

const PathBox = styled.div`
  display: flex;
  align-items: center;
  width: 292px;
  height: 22px;
  margin-left: -1px;
  padding: 0 0 1px 2px;
  border: 1px solid #d9d9d9;
`;

const Crumb = styled.span<{ $left: number; $dark?: boolean }>`
  margin-left: ${(props) => props.$left}px;
  color: ${(props) => (props.$dark ? "#000" : "#555")};
  font-size: ${(props) => (props.$dark ? "inherit" : "15px")};
  line-height: 18px;
`;

const CrumbArrow = styled.span`
  margin: 0 9px 0 8px;
  color: #777;
`;

const PathEnd = styled.span`
  margin-left: auto;
  padding-right: 4px;
  color: #777;
`;

const Refresh = styled.span`
  display: flex;
  align-items: center;
  height: 20px;
  padding: 0 3px 0 4px;
  border-left: 1px solid #d9d9d9;
  color: #777;
`;

const SearchBox = styled.div`
  display: flex;
  align-items: center;
  justify-content: space-between;
  width: 202px;
  height: 22px;
  margin-left: 12px;
  padding: 0 8px 1px;
  border: 1px solid #d9d9d9;
  color: #6d6d6d;
`;

const CommandBar = styled.div`
  display: flex;
  align-items: center;
  height: 31px;
  padding: 0 0 1px 18px;
  border-bottom: 1px solid #e6e8ec;
  background: #f5f6fa;
`;

const Command = styled.div<{ $left?: number }>`
  display: flex;
  align-items: center;
  gap: 5px;
  margin-left: ${(props) => props.$left ?? 0}px;
  color: #34415f;
`;

const Caret = styled.i`
  border: 4px solid transparent;
  border-top-color: #26324a;
  border-bottom: 0;
`;

const CommandIcons = styled.div`
  display: flex;
  align-items: center;
  margin-left: auto;
  padding-right: 15px;
  gap: 8px;
`;

const PreviewIcon = styled.div`
  margin: 0 12px 0 14px;
`;

const HelpBadge = styled.div`
  display: flex;
  align-items: center;
  justify-content: center;
  width: 16px;
  height: 16px;
  border-radius: 50%;
  background: #0f5fb4;
  color: #fff;
  font-weight: 700;
  font-size: 12px;
`;

const Panes = styled.div`
  display: flex;
  height: 299px;
`;

const PlaceList = styled.div`
  width: 139px;
  overflow: hidden;
  > :first-child {
    height: 23px;
    padding-bottom: 1px;
  }
`;

const Place = styled.div<{ $level: number; $selected?: boolean }>`
  display: flex;
  align-items: center;
  gap: 5px;
  height: 24px;
  padding-left: ${(props) => 32 + props.$level * 8}px;
  background: ${(props) => (props.$selected ? "#d9d9d9" : "transparent")};
`;

const VerticalScroll = styled.div`
  display: flex;
  flex-direction: column;
  align-items: center;
  justify-content: space-between;
  width: 16px;
  margin: 0 3px 0 1px;
  padding: 5px 0 4px;
  background: #f0f0f0;
  color: #505050;
`;

const VerticalThumb = styled.div`
  width: 16px;
  height: 79px;
  margin: 130px 0 auto;
  background: #cdcdcd;
`;

const FilePane = styled.div`
  display: flex;
  flex-direction: column;
  width: 465px;
  overflow: hidden;
`;

const ColumnHeads = styled.div`
  position: relative;
  display: flex;
  height: 26px;
  margin-bottom: 5px;
`;

const Head = styled.div<{ $width: number; $muted?: boolean }>`
  flex: none;
  width: ${(props) => props.$width}px;
  padding: ${(props) => (props.$muted ? "0 0 0 18px" : "0 0 0 6px")};
  border-right: 1px solid #e5e5e5;
  color: ${(props) => (props.$muted ? "#5f6b7d" : "#4c607a")};
  line-height: 26px;
`;

const SortMark = styled.div`
  position: absolute;
  top: 0;
  left: 138px;
`;

const FileRow = styled.div<{ $selected?: boolean }>`
  display: flex;
  align-items: center;
  flex: none;
  height: 21px;
  margin-left: 15px;
  border: 1px solid ${(props) => (props.$selected ? "#99d1ff" : "transparent")};
  border-right: 0;
  background: ${(props) => (props.$selected ? "#cce8ff" : "transparent")};
  color: #6d6d6d;
`;

const FileName = styled.div`
  display: flex;
  align-items: center;
  flex: none;
  gap: 5px;
  width: 263px;
  padding-left: 4px;
  color: #000;
`;

const FileDate = styled.div`
  flex: none;
  width: 144px;
  letter-spacing: -0.1px;
`;

const FileType = styled.div`
  flex: none;
`;

const HorizontalScroll = styled.div`
  display: flex;
  align-items: center;
  height: 15px;
  margin: auto 0 1px 1px;
  padding: 0 4px;
  background: #f0f0f0;
  color: #505050;
`;

const HorizontalThumb = styled.div`
  width: 319px;
  height: 15px;
  margin: 0 auto 0 4px;
  background: #cdcdcd;
`;

const DialogFooter = styled.div`
  position: relative;
  flex: 1;
  padding: 9px 18px 0 0;
  background: #f0f0f0;
`;

const FooterRow = styled.div<{ $top?: number }>`
  display: flex;
  align-items: flex-start;
  justify-content: flex-end;
  margin-top: ${(props) => props.$top ?? 0}px;
`;

const FileLabel = styled.span`
  margin-right: 5px;
  line-height: 23px;
`;

const NameField = styled.div`
  display: flex;
  align-items: center;
  justify-content: space-between;
  width: 218px;
  height: 24px;
  margin-right: 12px;
  padding: 0 3px;
  border: 1px solid #7a7a7a;
  background: #fff;
  svg {
    color: #555;
  }
`;

const TypeField = styled.div`
  display: flex;
  align-items: center;
  justify-content: space-between;
  width: 188px;
  height: 23px;
  margin-right: -1px;
  padding: 0 3px;
  border: 1px solid #adadad;
  background: #e1e1e1;
  svg {
    color: #555;
  }
`;

const PushButton = styled.div<{ $width: number; $right: number }>`
  display: flex;
  align-items: center;
  justify-content: center;
  width: ${(props) => props.$width}px;
  height: 24px;
  margin-right: ${(props) => props.$right}px;
  padding-bottom: 2px;
  border: 1px solid #adadad;
  background: #e1e1e1;
`;

const OpenButton = styled.div`
  display: flex;
  align-items: center;
  width: 86px;
  height: 24px;
  margin-right: 14px;
  border: 2px solid #0078d7;
  background: #e1e1e1;
  span {
    flex: 1;
    padding: 0 2px 2px 0;
    text-align: center;
  }
`;

const SplitArrow = styled.div`
  display: flex;
  align-items: center;
  height: 18px;
  padding: 0 1px 0 2px;
  border-left: 1px solid #444;
`;

const Grip = styled.div`
  position: absolute;
  right: 2px;
  bottom: 1px;
`;

const DragTile = styled.div`
  position: absolute;
  top: 200px;
  left: 821px;
  width: 104px;
  height: 104px;
  padding: 9px 0 0 20px;
  border: 1px solid #5d6b7b;
  border-radius: 2px;
  background: linear-gradient(#5b6570, #4f5c69 60%, #475b70);
`;

const CopyTip = styled.div`
  position: absolute;
  top: 306px;
  left: 884px;
  display: flex;
  align-items: center;
  gap: 5px;
  width: 55px;
  height: 20px;
  padding: 0 0 1px 4px;
  border: 1px solid #9a9aa0;
  background: #fff;
  color: #2b3fae;
  font-size: 11.8px;
`;

const WatermarkLayer = styled.svg`
  position: absolute;
  top: 610px;
  left: 1036px;
  opacity: 0.6;
`;

const TaskRow = styled.div`
  display: flex;
  background: linear-gradient(90deg, #021820, #02131d 55%, #030a17);
`;

const StartButton = styled.div`
  display: flex;
  align-items: center;
  justify-content: center;
  width: 48px;
`;

const TaskSearch = styled.div`
  display: flex;
  align-items: center;
  width: 288px;
  padding-left: 11px;
  border: 1px solid #c9c9c9;
  background: #f2f2f2;
  color: #222;
  font-size: 14px;
  span {
    width: 175px;
    margin-left: 9px;
    color: #444;
  }
`;

const TaskButton = styled.div<{ $active?: boolean; $open?: boolean; $gap?: number }>`
  display: flex;
  align-items: center;
  justify-content: center;
  width: 48px;
  margin-right: ${(props) => props.$gap ?? 0}px;
  background: ${(props) => (props.$active ? "#3a4c53" : "transparent")};
  box-shadow: ${(props) => (props.$active ? "inset 0 -2px #76b9ed" : "none")};
  &::after {
    content: "";
    display: ${(props) => (props.$open ? "block" : "none")};
    align-self: flex-end;
    width: 40px;
    height: 2px;
    margin: 0 -8px 0 -32px;
    background: #76b9ed;
  }
`;

const Tray = styled.div`
  display: flex;
  align-items: center;
  margin: 0 4px 0 auto;
  padding-right: 8px;
  border-right: 1px solid #4a505b;
  color: #fff;
`;

const TraySlot = styled.div`
  display: flex;
  justify-content: center;
  width: 24px;
`;

const Clock = styled.div`
  display: flex;
  flex-direction: column;
  align-items: center;
  width: 64px;
  font-size: 11.2px;
  line-height: 18px;
  letter-spacing: -0.15px;
`;

const Notifications = styled.div`
  display: flex;
  justify-content: center;
  width: 40px;
`;
